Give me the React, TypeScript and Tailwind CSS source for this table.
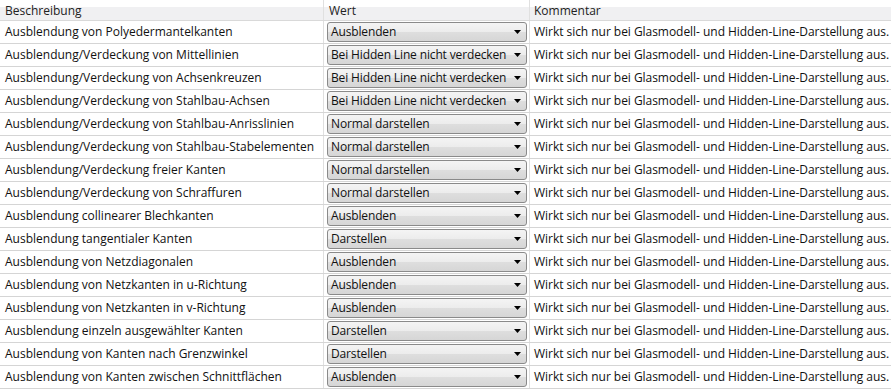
import React from "react";

const rows: [string, string][] = [
  ["Ausblendung von Polyedermantelkanten", "Ausblenden"],
  ["Ausblendung/Verdeckung von Mittellinien", "Bei Hidden Line nicht verdecken"],
  ["Ausblendung/Verdeckung von Achsenkreuzen", "Bei Hidden Line nicht verdecken"],
  ["Ausblendung/Verdeckung von Stahlbau-Achsen", "Bei Hidden Line nicht verdecken"],
  ["Ausblendung/Verdeckung von Stahlbau-Anrisslinien", "Normal darstellen"],
  ["Ausblendung/Verdeckung von Stahlbau-Stabelementen", "Normal darstellen"],
  ["Ausblendung/Verdeckung freier Kanten", "Normal darstellen"],
  ["Ausblendung/Verdeckung von Schraffuren", "Normal darstellen"],
  ["Ausblendung collinearer Blechkanten", "Ausblenden"],
  ["Ausblendung tangentialer Kanten", "Darstellen"],
  ["Ausblendung von Netzdiagonalen", "Ausblenden"],
  ["Ausblendung von Netzkanten in u-Richtung", "Ausblenden"],
  ["Ausblendung von Netzkanten in v-Richtung", "Ausblenden"],
  ["Ausblendung einzeln ausgewählter Kanten", "Darstellen"],
  ["Ausblendung von Kanten nach Grenzwinkel", "Darstellen"],
  ["Ausblendung von Kanten zwischen Schnittflächen", "Ausblenden"],
];

const comment = "Wirkt sich nur bei Glasmodell- und Hidden-Line-Darstellung aus.";

function Select({ value }: { value: string }) {
  return (
    <div className="flex h-[20px] w-[200px] items-center rounded-[3px] border border-[#8a8a8a] bg-[linear-gradient(to_bottom,#f4f4f4_0%,#ececec_50%,#dedede_51%,#d6d6d6_100%)] pl-[3px] pr-[5px]">
      <span className="flex-1 whitespace-nowrap tracking-[-0.14px]">{value}</span>
      <svg width="7" height="4" viewBox="0 0 7 4" className="ml-[2px] shrink-0">
        <path d="M0 0 H7 L3.5 4 Z" fill="#000" />
      </svg>
    </div>
  );
}

export default function App() {
  return (
    <div
      className="h-[391px] w-[891px] overflow-hidden bg-white text-[12px] leading-none text-[#111]"
      style={{ fontFamily: '"Open Sans", "Noto Sans", sans-serif' }}
    >
      <div className="flex h-[21px] border-b border-[#d9d9d9] bg-[linear-gradient(to_bottom,#ffffff_0%,#ffffff_33%,#f0f0f2_36%,#f0f0f2_100%)] text-[#222]">
        <div className="flex w-[324px] items-center border-r border-[#e0e0e0] pl-[5px] pt-[1px]">Beschreibung</div>
        <div className="flex w-[206px] items-center border-r border-[#e0e0e0] pl-[5px] pt-[1px]">Wert</div>
        <div className="flex flex-1 items-center pl-[4px] pt-[1px]">Kommentar</div>
      </div>
      {rows.map(([d, v], i) => (
        <div key={i} className="flex h-[23px] border-b border-[#d5d5d5]">
          <div className="flex w-[324px] items-center border-r border-[#e0e0e0] pl-[5px]">{d}</div>
          <div className="flex w-[206px] items-center border-r border-[#e0e0e0] pl-[3px]">
            <Select value={v} />
          </div>
          <div className="flex min-w-0 flex-1 items-center whitespace-nowrap pl-[4px] tracking-[-0.04px]">{comment}</div>
        </div>
      ))}
    </div>
  );
}
